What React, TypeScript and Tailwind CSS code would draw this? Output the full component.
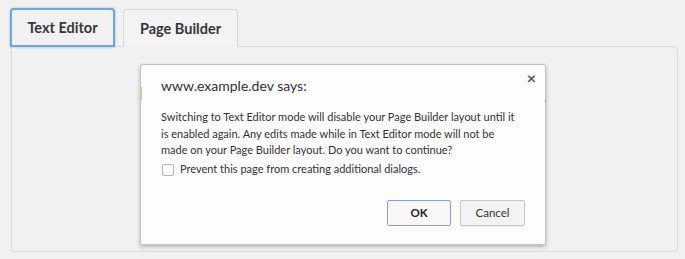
const body =
  "Switching to Text Editor mode will disable your Page Builder layout until it is enabled again. Any edits made while in Text Editor mode will not be made on your Page Builder layout. Do you want to continue?";

export default function App() {
  return (
    <div className="w-[685px] h-[259px] bg-[#f1f1f1] pl-[10px] pt-[8px] pr-[7px] font-['Segoe_UI','Lato',sans-serif] text-[#23282d] overflow-hidden">
      {/* Tabs */}
      <div className="flex items-end gap-[8px] relative z-10">
        <button className="w-[105px] h-[39px] rounded-t-[4px] border-2 border-[#6ea6dd] bg-[#f1f1f1] text-[14.5px] font-bold text-[#32373c] shadow-[0_0_2px_rgba(30,140,190,0.6)]">
          Text Editor
        </button>
        <button className="w-[115px] h-[38px] rounded-t-[4px] border border-[#d6d6d6] border-b-0 bg-[#f3f3f3] text-[14.5px] font-bold text-[#32373c]">
          Page Builder
        </button>
      </div>

      {/* Panel */}
      <div className="relative -mt-[1px] ml-[1px] w-[667px] h-[206px] border border-[#dcdcdc] rounded-b-[3px] rounded-tr-[3px] bg-[#f1f1f1] pt-[17px]">
        {/* bits of the page showing through the dialog edge */}
        <span className="absolute z-10 left-[129px] top-[40px] w-[1px] h-[13px] bg-[#f2c17a]" />
        <span className="absolute z-10 left-[533px] top-[53px] w-[1px] h-[2px] bg-[#7aa3d6]" />

        {/* Dialog */}
        <div className="relative ml-[128px] w-[406px] h-[181px] bg-[#fcfcfc] border border-[#c3c3c3] rounded-[2px] shadow-[0_2px_4px_rgba(0,0,0,0.25)] px-[20px] pt-[11px]">
          <button className="absolute right-[9px] top-[5px] text-[#555] text-[16px] leading-none font-bold">
            ×
          </button>
          <div className="text-[14px] text-[#333] leading-[20px]">www.example.dev says:</div>
          <p className="mt-[13px] text-[11px] leading-[16.5px] text-[#333] pr-[4px]">{body}</p>
          <label className="mt-[3px] h-[16px] flex items-center gap-[6px] text-[11px] text-[#333]">
            <span className="w-[12px] h-[12px] border border-[#b5b5b5] rounded-[2px] bg-white ml-[1px]" />
            Prevent this page from creating additional dialogs.
          </label>
          <div className="flex justify-end gap-[9px] mt-[22px]">
            <button className="w-[64px] h-[26px] border border-[#7da2d8] rounded-[2px] bg-[#f8f8f8] text-[11.5px] font-bold text-[#222]">
              OK
            </button>
            <button className="w-[65px] h-[26px] border border-[#c8c8c8] rounded-[2px] bg-[#f3f3f3] text-[11.5px] text-[#333] shadow-[0_1px_0_rgba(0,0,0,0.06)]">
              Cancel
            </button>
          </div>
        </div>
      </div>
    </div>
  );
}
